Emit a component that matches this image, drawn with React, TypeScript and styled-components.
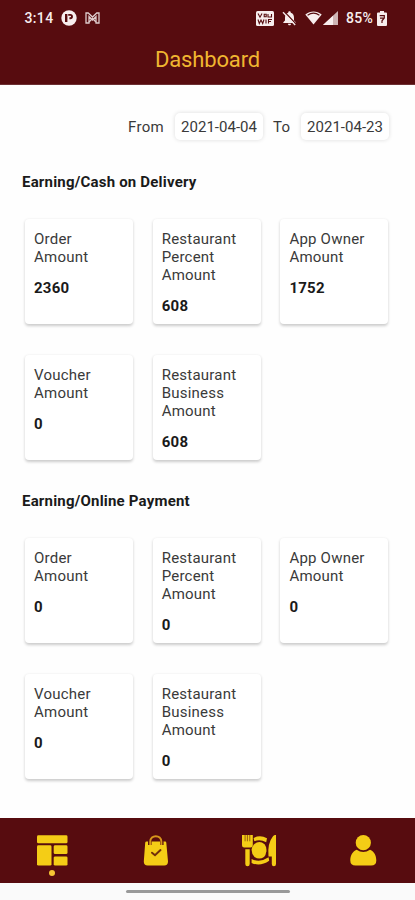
import React from 'react';
import styled, { createGlobalStyle } from 'styled-components';

const maroon = '#570c0f';
const gold = '#f4cd16';

const GlobalStyle = createGlobalStyle`
  * { box-sizing: border-box; }
  body { margin: 0; background: #fefefe; font-family: Roboto, "Liberation Sans", sans-serif; }
`;

const Screen = styled.div`
  width: 415px;
  height: 900px;
  display: flex;
  flex-direction: column;
  overflow: hidden;
  background: #fefefe;
`;

const Header = styled.header`
  height: 85px;
  flex: none;
  background: ${maroon};
  border-bottom: 1px solid #6d3033;
`;

const StatusBar = styled.div`
  height: 36px;
  padding: 0 28px 0 24.5px;
  display: flex;
  align-items: center;
  justify-content: space-between;
  color: #f7eeee;
`;

const StatusGroup = styled.div<{ $gap: number }>`
  display: flex;
  align-items: center;
  gap: ${(p) => p.$gap}px;
  svg { display: block; }
`;

const StatusText = styled.span<{ $spacing: number }>`
  font-size: 14px;
  font-weight: 500;
  line-height: 18px;
  letter-spacing: ${(p) => p.$spacing}px;
`;

const Title = styled.h1`
  margin: 9px 0 0;
  font-size: 22px;
  font-weight: 400;
  line-height: 30px;
  letter-spacing: -0.15px;
  text-align: center;
  color: #f0b631;
`;

const Content = styled.main`
  flex: 1;
  padding: 27px 26px 0 22px;
`;

const DateRow = styled.div`
  display: flex;
  align-items: center;
  justify-content: flex-end;
  height: 28px;
  font-size: 15px;
  line-height: 20px;
  color: #3a3a3a;
`;

const DateLabel = styled.span<{ $width: number }>`
  width: ${(p) => p.$width}px;
  padding-top: 1px;
  letter-spacing: 0.3px;
`;

const DateField = styled.div<{ $after: number }>`
  width: 88px;
  height: 27px;
  margin-right: ${(p) => p.$after}px;
  padding-top: 1px;
  display: flex;
  align-items: center;
  justify-content: center;
  border-radius: 5px;
  background: #fff;
  box-shadow: 0 0 4px rgba(0, 0, 0, 0.14);
  letter-spacing: 0.02px;
  white-space: nowrap;
`;

const Section = styled.section<{ $top: number }>`
  margin-top: ${(p) => p.$top}px;
`;

const SectionTitle = styled.h2`
  margin: 0;
  font-size: 15px;
  font-weight: 700;
  line-height: 20px;
  letter-spacing: 0.2px;
  color: #1a1a1a;
`;

const CardGrid = styled.div`
  margin: 27px 0 0 3px;
  display: grid;
  grid-template-columns: repeat(3, 108px);
  grid-auto-rows: 105px;
  column-gap: 19.7px;
  row-gap: 31px;
`;

const Card = styled.article`
  padding: 11px 0 0 9px;
  border-radius: 4px;
  background: #fff;
  box-shadow: 0 1.5px 3px rgba(0, 0, 0, 0.2);
`;

const CardLabel = styled.div`
  font-size: 15px;
  line-height: 18.1px;
  letter-spacing: 0.22px;
  color: #3a3a3a;
  white-space: pre-line;
`;

const CardValue = styled.div`
  margin-top: 13px;
  font-size: 15px;
  font-weight: 700;
  line-height: 18px;
  letter-spacing: 0.25px;
  color: #1a1a1a;
`;

const TabBar = styled.nav`
  height: 65px;
  flex: none;
  display: grid;
  grid-template-columns: repeat(4, 1fr);
  background: ${maroon};
`;

const Tab = styled.div`
  display: flex;
  flex-direction: column;
  align-items: center;
  padding-top: 16px;
  color: ${gold};
  svg { display: block; flex: none; }
`;

const ActiveDot = styled.span`
  width: 6px;
  height: 6px;
  margin-top: 4px;
  border-radius: 50%;
  background: #f6c634;
`;

const GestureArea = styled.div`
  height: 17px;
  flex: none;
  padding-top: 7px;
  background: #fafafa;
`;

const GestureHandle = styled.div`
  width: 164px;
  height: 3px;
  margin: 0 auto;
  border-radius: 2px;
  background: #999;
`;

const PIcon = () => (
  <svg width="16" height="16" viewBox="0 0 16 16">
    <circle cx="8" cy="8" r="7.7" fill="currentColor" />
    <path d="M4 4H6.4V12H4Z" fill={maroon} />
    <path d="M7.2 4.9H9.3A1.7 1.7 0 0 1 9.3 8.3H8.4" fill="none" stroke={maroon} strokeWidth="1.9" />
  </svg>
);

const MailIcon = () => (
  <svg width="15" height="12" viewBox="0 0 15 12" fill="none" stroke="currentColor" strokeWidth="1.3" opacity=".85">
    <path d="M4 11H1V1H3.2L7.5 5 11.8 1H14V11H11V4.5L7.5 8 4 4.5Z" />
    <path d="M4 10 7.5 6.5 11 10" />
  </svg>
);

const WifiCallIcon = () => (
  <svg width="18" height="15" viewBox="0 0 18 15">
    <rect width="18" height="15" rx="1.5" fill="currentColor" />
    <g fill="none" stroke={maroon} strokeWidth="1.1">
      <path d="M2 2.5 4 6.2 6 2.5M8.2 3.2h2v2.6h-2zM12 3v3h3.5V3M2 8.5l1.3 4L5 9l1.7 3.5 1.3-4M10 8.5v4M12.5 12.5v-4H16M12.5 10.5H15" />
    </g>
  </svg>
);

const BellOffIcon = () => (
  <svg width="15" height="16" viewBox="0 0 15 16">
    <path d="M6.2 2.7C6.2.8 8.8.8 8.8 2.7 11.4 3.5 12 5.4 12 8v2.5l1.7 1.8v.7H1.3v-.7L3 10.5V8c0-2.6.7-4.5 3.2-5.3ZM6 13.8h3c0 2-3 2-3 0Z" fill="currentColor" />
    <path d="M2.2 1.5 14 14" stroke={maroon} strokeWidth="1.2" />
    <path d="M1 2.2 13.2 15" stroke="currentColor" strokeWidth="1.3" />
  </svg>
);

const WifiIcon = () => (
  <svg width="17" height="14" viewBox="0 0 17 14">
    <path d="M.3 3.4C5.2-.5 11.8-.5 16.7 3.4L8.5 13.6Z" fill="currentColor" />
    <path d="M2.6 4.3C6.2 1.7 10.8 1.7 14.4 4.3" fill="none" stroke={maroon} strokeWidth="1.1" />
  </svg>
);

const SignalIcon = () => (
  <svg width="15" height="14" viewBox="0 0 15 14" fill="currentColor">
    <path d="M0 14 15 0V14Z" opacity=".75" />
    <path d="M0 14 10 4.7V14Z" />
  </svg>
);

const BatteryIcon = () => (
  <svg width="10" height="15" viewBox="0 0 10 15">
    <path d="M3 0h4v1.5h2Q10 1.5 10 2.5v11.3q0 1.2-1 1.2H1q-1 0-1-1.2V2.5q0-1 1-1h2Z" fill="currentColor" />
    <path d="M2.7 4.6H7.3V7L5 9.8V12M3 7.2h3.5" fill="none" stroke={maroon} strokeWidth="1.2" />
  </svg>
);

const DashboardIcon = () => (
  <svg width="32" height="32" viewBox="0 0 32 32" fill="currentColor">
    <rect x="1" y="1.3" width="30.5" height="8" rx="1.4" />
    <rect x="1" y="11.3" width="14.5" height="20.3" rx="1.4" />
    <rect x="17.7" y="11.3" width="13.8" height="8.8" rx="1.4" />
    <rect x="17.7" y="22.4" width="13.8" height="9.2" rx="1.4" />
  </svg>
);

const BagIcon = () => (
  <svg width="26" height="32" viewBox="0 0 26 32">
    <path d="M3.5 7.6H22.2Q23.2 7.6 23.3 8.8L25 27.4Q25 31.5 21.2 31.5H4.7Q.8 31.5.8 27.4L2.2 8.8Q2.4 7.6 3.5 7.6Z" fill="currentColor" />
    <path d="M6.8 11V7.8C6.8.3 18.8.3 18.8 7.8V11" fill="none" stroke={maroon} strokeWidth="3.5" />
    <path d="M7.2 11V7.8C7.2.3 18.4.3 18.4 7.8V11" fill="none" stroke="#d6951b" strokeWidth="1.9" />
    <path d="m9 18.7 3 2.5 5.5-5.1" fill="none" stroke="#71300b" strokeWidth="2" strokeLinecap="round" />
  </svg>
);

const DiningIcon = () => (
  <svg width="34" height="33" viewBox="0 0 34 33" fill="currentColor">
    <path d="M12.2 10.2Q17.3 5.8 22.6 10.2 24.8 13 24.4 17.3 24 21 22 23Q17.3 26 12.5 23 9.6 19.8 9.6 15.8 10 12.2 12.2 10.2Z" />
    <path d="M11.6 4Q18 .6 25 4.2L24.2 8.2Q18 4.7 12.3 7.2ZM9.6 25Q18 29 26.6 23.2L27.2 26.8Q18 33 9.6 28.9Z" />
    <path d="M0 1h10.8v10.2q0 2.3-2.3 2.3H2.2Q0 13.5 0 11.2ZM3.3 15.2h4.4V30q0 2.2-2.2 2.2T3.3 30Z" />
    <path d="M3.1 1v6.3M5.4 1v6.3M7.8 1v6.3" stroke="#91540f" strokeWidth=".9" />
    <path d="M34 1V30q0 2.2-2.1 2.2T29.8 30V22.5H26.5Q25.2 9.3 31 2.2 32.4.5 34 1Z" />
  </svg>
);

const ProfileIcon = () => (
  <svg width="28" height="32" viewBox="0 0 28 32" fill="currentColor">
    <circle cx="14.3" cy="8.7" r="7.6" />
    <path d="M7.6 15.7Q14.3 20.4 21 15.7C25.4 17.6 27.3 21.6 27.3 26.4Q27.3 31.5 22.1 31.5H6.6Q1.3 31.5 1.3 26.4C1.3 21.6 3.3 17.6 7.6 15.7Z" />
  </svg>
);

type Earnings = { title: string; cards: [string, number][] };

const makeSection = (title: string, values: number[]): Earnings => ({
  title,
  cards: [
    ['Order\nAmount', values[0]],
    ['Restaurant\nPercent\nAmount', values[1]],
    ['App Owner\nAmount', values[2]],
    ['Voucher\nAmount', values[3]],
    ['Restaurant\nBusiness\nAmount', values[4]],
  ],
});

const sections = [
  makeSection('Earning/Cash on Delivery', [2360, 608, 1752, 0, 608]),
  makeSection('Earning/Online Payment', [0, 0, 0, 0, 0]),
];

export default function App() {
  return (
    <>
      <GlobalStyle />
      <Screen>
        <Header>
          <StatusBar>
            <StatusGroup $gap={8}>
              <StatusText $spacing={0.35}>3:14</StatusText>
              <PIcon />
              <MailIcon />
            </StatusGroup>
            <StatusGroup $gap={8}>
              <WifiCallIcon />
              <BellOffIcon />
              <StatusGroup $gap={1}>
                <WifiIcon />
                <SignalIcon />
              </StatusGroup>
              <StatusGroup $gap={4}>
                <StatusText $spacing={0.3}>85%</StatusText>
                <BatteryIcon />
              </StatusGroup>
            </StatusGroup>
          </StatusBar>
          <Title>Dashboard</Title>
        </Header>
        <Content>
          <DateRow>
            <DateLabel $width={47}>From</DateLabel>
            <DateField $after={10}>2021-04-04</DateField>
            <DateLabel $width={28}>To</DateLabel>
            <DateField $after={0}>2021-04-23</DateField>
          </DateRow>
          {sections.map((section, i) => (
            <Section key={section.title} $top={i === 0 ? 32 : 31}>
              <SectionTitle>{section.title}</SectionTitle>
              <CardGrid>
                {section.cards.map(([label, value]) => (
                  <Card key={label}>
                    <CardLabel>{label}</CardLabel>
                    <CardValue>{value}</CardValue>
                  </Card>
                ))}
              </CardGrid>
            </Section>
          ))}
        </Content>
        <TabBar>
          <Tab><DashboardIcon /><ActiveDot /></Tab>
          <Tab><BagIcon /></Tab>
          <Tab><DiningIcon /></Tab>
          <Tab><ProfileIcon /></Tab>
        </TabBar>
        <GestureArea><GestureHandle /></GestureArea>
      </Screen>
    </>
  );
}
